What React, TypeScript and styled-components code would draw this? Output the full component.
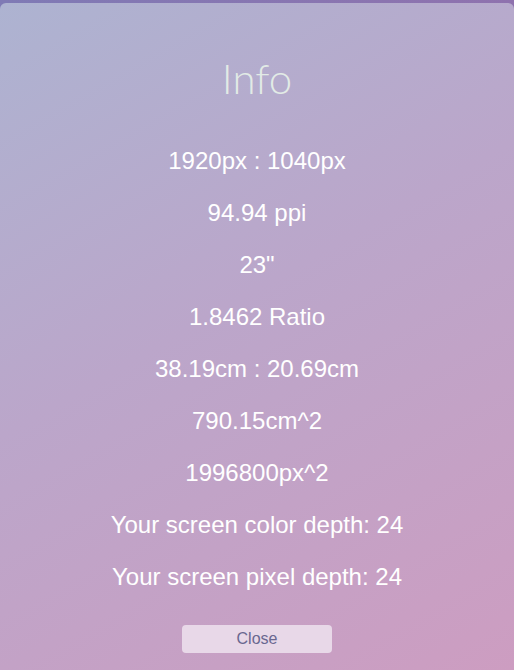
import styled, { createGlobalStyle } from 'styled-components'

const GlobalStyle = createGlobalStyle`
    html, body {
        margin: 0;
        padding: 0;
        height: 100%;
    }
    body {
        background: linear-gradient(90deg, #7f7ab5 0%, #8f72ae 100%);
        font-family: 'Liberation Sans', Arial, sans-serif;
    }
    #root {
        height: 100%;
    }
`

const Page = styled.div`
    height: 100%;
    padding-top: 3px;
    box-sizing: border-box;
`

const Card = styled.section`
    height: 100%;
    box-sizing: border-box;
    padding-top: 54px;
    border-radius: 6px 6px 0 0;
    background: linear-gradient(150deg, #adb3d1 0%, #bba6ca 45%, #cd9dc1 100%);
    display: flex;
    flex-direction: column;
    align-items: center;
`

const Title = styled.h1`
    margin: 0 0 36px 0;
    font-family: Lato, 'Open Sans', sans-serif;
    font-weight: 300;
    font-size: 42px;
    line-height: 42px;
    color: #e2ebe6;
`

const InfoList = styled.div`
    display: flex;
    flex-direction: column;
    align-items: center;
`

const InfoRow = styled.div`
    height: 52px;
    line-height: 52px;
    font-size: 24px;
    color: #ffffff;
    white-space: nowrap;
`

const CloseButton = styled.button`
    margin-top: 22px;
    width: 150px;
    height: 28px;
    border: none;
    border-radius: 4px;
    background: #e8d8e8;
    color: #6a6790;
    font-family: 'Liberation Sans', Arial, sans-serif;
    font-size: 16px;
    cursor: pointer;
`

const rows = [
    '1920px : 1040px',
    '94.94 ppi',
    '23"',
    '1.8462 Ratio',
    '38.19cm : 20.69cm',
    '790.15cm^2',
    '1996800px^2',
    'Your screen color depth: 24',
    'Your screen pixel depth: 24',
]

export default function App() {
    return (
        <>
            <GlobalStyle />
            <Page>
                <Card>
                    <Title>Info</Title>
                    <InfoList>
                        {rows.map((r) => (
                            <InfoRow key={r}>{r}</InfoRow>
                        ))}
                    </InfoList>
                    <CloseButton>Close</CloseButton>
                </Card>
            </Page>
        </>
    )
}
